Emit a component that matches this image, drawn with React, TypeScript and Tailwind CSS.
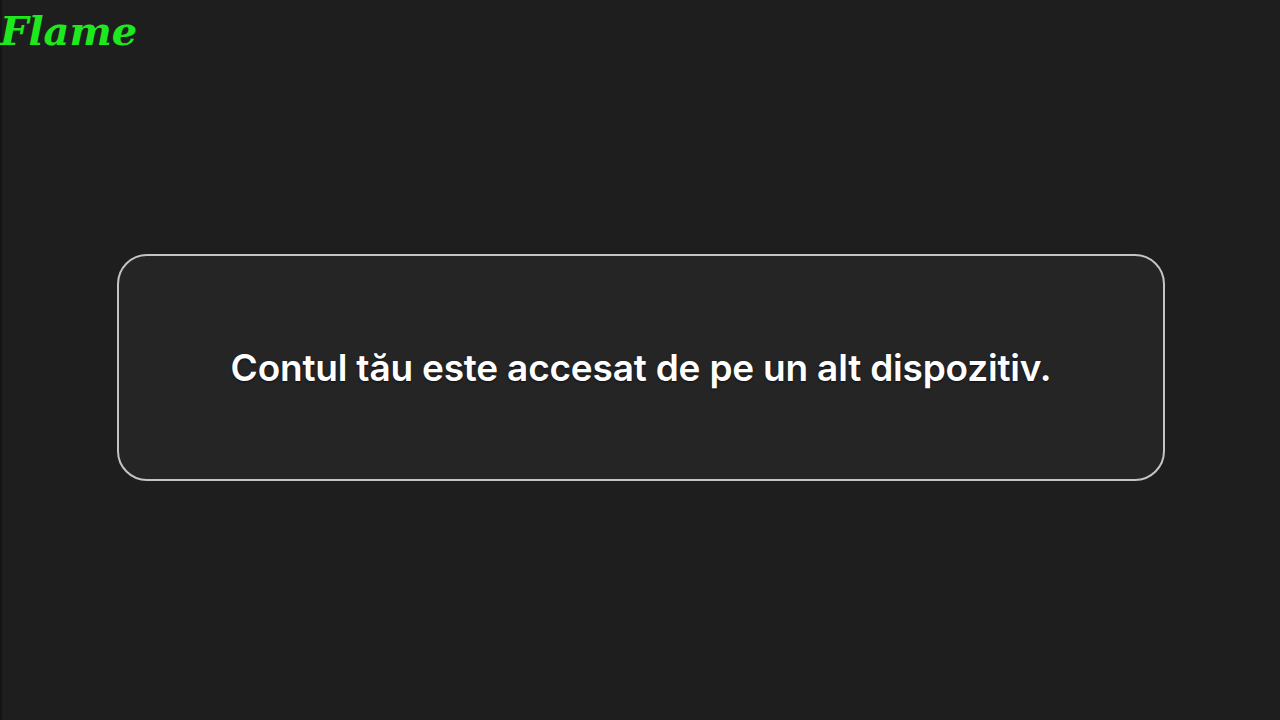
import React from "react";

const App = () => {
  return (
    <div className="min-h-screen w-full bg-[#1e1e1e] border-l-2 border-[#141414] flex flex-col">
      <header className="h-[60px] flex items-start">
        <h1
          className="text-[40px] leading-[60px] font-bold italic text-[#1ee81e] -ml-[2px] mt-[1px]"
          style={{ fontFamily: '"DejaVu Serif", serif' }}
        >
          Flame
        </h1>
      </header>
      <main className="flex justify-center pt-[194px]">
        <div className="w-[1048px] h-[227px] rounded-[30px] border-[2px] border-[#c4c4c4] bg-[#252525] flex items-center justify-center">
          <p
            className="text-[37px] leading-[44px] font-semibold text-white tracking-[-0.2px] [text-shadow:0_1px_2px_rgba(0,0,0,0.6)]"
            style={{ fontFamily: 'Inter, "Noto Sans", sans-serif' }}
          >
            Contul tău este accesat de pe un alt dispozitiv.
          </p>
        </div>
      </main>
    </div>
  );
};

export default App;
